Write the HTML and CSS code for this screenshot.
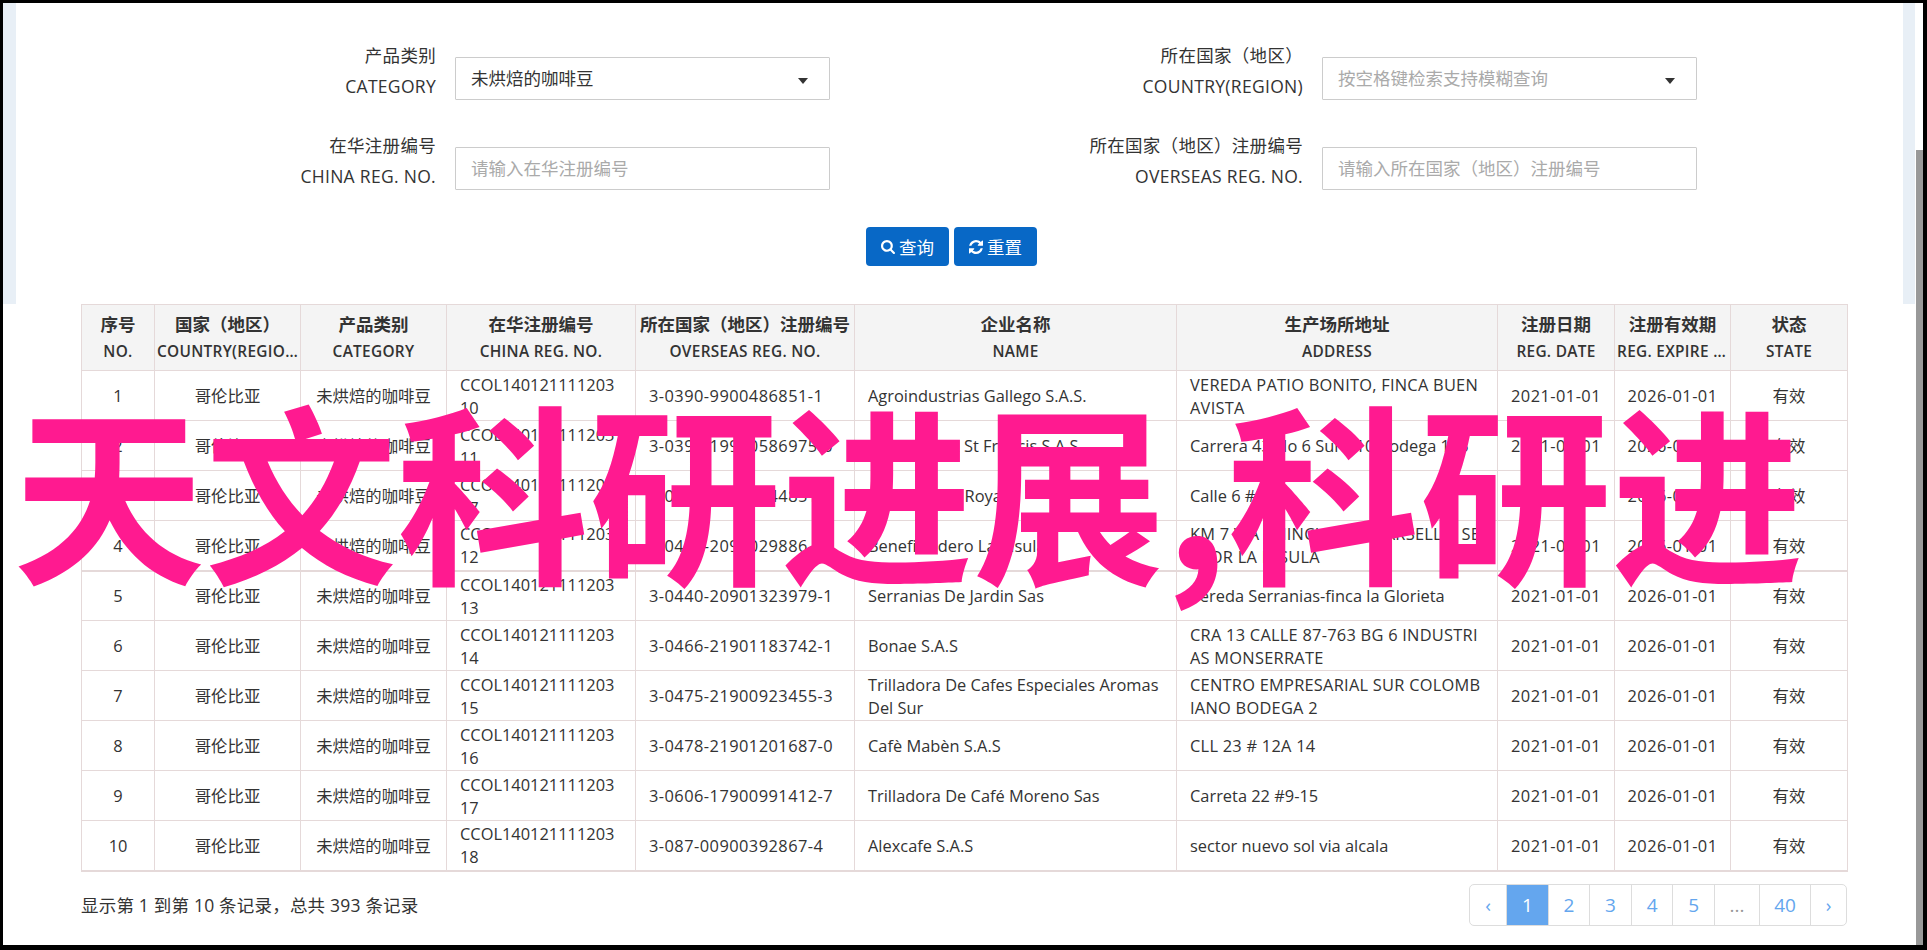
FILE: index.html
```html
<!DOCTYPE html>
<html lang="zh-CN">
<head>
  <meta charset="UTF-8" />
  <title>天文科研进展,科研进</title>
  <link rel="stylesheet" href="styles.css">
</head>
<body>
<div class="frame">

  <form class="search">
    <div class="fields">
      <div class="field">
        <label class="field-label">产品类别<br>CATEGORY</label>
        <div class="control">未烘焙的咖啡豆<span class="caret"></span></div>
      </div>
      <div class="field">
        <label class="field-label">所在国家&#xFF08;地区&#xFF09;<br>COUNTRY(REGION)</label>
        <div class="control hint">按空格键检索支持模糊查询<span class="caret"></span></div>
      </div>
      <div class="field">
        <label class="field-label">在华注册编号<br>CHINA REG. NO.</label>
        <div class="control hint">请输入在华注册编号</div>
      </div>
      <div class="field">
        <label class="field-label">所在国家&#xFF08;地区&#xFF09;注册编号<br>OVERSEAS REG. NO.</label>
        <div class="control hint">请输入所在国家&#xFF08;地区&#xFF09;注册编号</div>
      </div>
    </div>
    <div class="actions">
      <button type="button" class="btn">
        <svg class="icon" viewBox="0 0 1664 1664"><path fill="currentColor" d="M1152 704q0-185-131.5-316.5t-316.5-131.5-316.5 131.5-131.5 316.5 131.5 316.5 316.5 131.5 316.5-131.5 131.5-316.5zm512 832q0 52-38 90t-90 38q-54 0-90-38l-343-342q-179 124-399 124-143 0-273.5-55.5t-225-150-150-225-55.5-273.5 55.5-273.5 150-225 225-150 273.5-55.5 273.5 55.5 225 150 150 225 55.5 273.5q0 220-124 399l343 343q37 37 37 90z"/></svg>查询
      </button>
      <button type="button" class="btn">
        <svg class="icon" viewBox="0 0 1536 1536"><path fill="currentColor" d="M1511 928q0 5-1 7-64 268-268 434.5t-478 166.5q-146 0-282.5-55t-243.5-157l-129 129q-19 19-45 19t-45-19-19-45v-448q0-26 19-45t45-19h448q26 0 45 19t19 45-19 45l-137 137q71 66 161 102t187 36q134 0 250-65t186-179q11-17 53-117 8-23 30-23h192q13 0 22.5 9.5t9.5 22.5zm25-800v448q0 26-19 45t-45 19h-448q-26 0-45-19t-19-45 19-45l138-138q-148-137-349-137-134 0-250 65t-186 179q-11 17-53 117-8 23-30 23h-199q-13 0-22.5-9.5t-9.5-22.5v-7q65-268 270-434.5t480-166.5q146 0 284 55.5t245 156.5l130-129q19-19 45-19t45 19 19 45z"/></svg>重置
      </button>
    </div>
  </form>

  <div class="results">
    <table class="grid">
      <colgroup>
        <col class="c-no"><col class="c-country"><col class="c-cat"><col class="c-china">
        <col class="c-overseas"><col class="c-name"><col class="c-addr">
        <col class="c-date"><col class="c-exp"><col class="c-state">
      </colgroup>
      <thead>
        <tr>
          <th>序号<span>NO.</span></th>
          <th>国家&#xFF08;地区&#xFF09;<span>COUNTRY(REGION)</span></th>
          <th>产品类别<span>CATEGORY</span></th>
          <th>在华注册编号<span>CHINA REG. NO.</span></th>
          <th>所在国家&#xFF08;地区&#xFF09;注册编号<span>OVERSEAS REG. NO.</span></th>
          <th>企业名称<span>NAME</span></th>
          <th>生产场所地址<span>ADDRESS</span></th>
          <th>注册日期<span>REG. DATE</span></th>
          <th>注册有效期<span>REG. EXPIRE DATE</span></th>
          <th>状态<span>STATE</span></th>
        </tr>
      </thead>
      <tbody>
        <tr><td class="mid">1</td><td class="mid">哥伦比亚</td><td class="mid">未烘焙的咖啡豆</td><td>CCOL14012111120310</td><td class="code">3-0390-9900486851-1</td><td>Agroindustrias Gallego S.A.S.</td><td class="addr caps">VEREDA PATIO BONITO, FINCA BUEN AVISTA</td><td class="mid code">2021-01-01</td><td class="mid code">2026-01-01</td><td class="mid">有效</td></tr>
        <tr><td class="mid">2</td><td class="mid">哥伦比亚</td><td class="mid">未烘焙的咖啡豆</td><td>CCOL14012111120311</td><td class="code">3-0391-19900586975-0</td><td>Cafes Oro &amp; St Francis S.A.S</td><td class="addr">Carrera 43 No 6 Sur-110 Bodega 105</td><td class="mid code">2021-01-01</td><td class="mid code">2026-01-01</td><td class="mid">有效</td></tr>
        <tr><td class="mid">3</td><td class="mid">哥伦比亚</td><td class="mid">未烘焙的咖啡豆</td><td>CCOL14012111120317</td><td class="code">3-0408-20901144851-1</td><td>Cooperativa Royal</td><td class="addr">Calle 6 # 4-28</td><td class="mid code">2021-01-01</td><td class="mid code">2026-01-01</td><td class="mid">有效</td></tr>
        <tr><td class="mid">4</td><td class="mid">哥伦比亚</td><td class="mid">未烘焙的咖啡豆</td><td>CCOL14012111120312</td><td class="code">3-0438-2090029886-9</td><td>Beneficiadero La Insula</td><td class="addr caps">KM 7 VÍA CHINCHINÁ - MARSELLA, SECTOR LA INSULA</td><td class="mid code">2021-01-01</td><td class="mid code">2026-01-01</td><td class="mid">有效</td></tr>
        <tr class="split"><td class="mid">5</td><td class="mid">哥伦比亚</td><td class="mid">未烘焙的咖啡豆</td><td>CCOL14012111120313</td><td class="code">3-0440-20901323979-1</td><td>Serranias De Jardin Sas</td><td class="addr">Vereda Serranias-finca la Glorieta</td><td class="mid code">2021-01-01</td><td class="mid code">2026-01-01</td><td class="mid">有效</td></tr>
        <tr><td class="mid">6</td><td class="mid">哥伦比亚</td><td class="mid">未烘焙的咖啡豆</td><td>CCOL14012111120314</td><td class="code">3-0466-21901183742-1</td><td>Bonae S.A.S</td><td class="addr caps">CRA 13 CALLE 87-763 BG 6 INDUSTRIAS MONSERRATE</td><td class="mid code">2021-01-01</td><td class="mid code">2026-01-01</td><td class="mid">有效</td></tr>
        <tr><td class="mid">7</td><td class="mid">哥伦比亚</td><td class="mid">未烘焙的咖啡豆</td><td>CCOL14012111120315</td><td class="code">3-0475-21900923455-3</td><td>Trilladora De Cafes Especiales Aromas Del Sur</td><td class="addr caps">CENTRO EMPRESARIAL SUR COLOMBIANO BODEGA 2</td><td class="mid code">2021-01-01</td><td class="mid code">2026-01-01</td><td class="mid">有效</td></tr>
        <tr><td class="mid">8</td><td class="mid">哥伦比亚</td><td class="mid">未烘焙的咖啡豆</td><td>CCOL14012111120316</td><td class="code">3-0478-21901201687-0</td><td>Cafè Mabèn S.A.S</td><td class="addr caps">CLL 23 # 12A 14</td><td class="mid code">2021-01-01</td><td class="mid code">2026-01-01</td><td class="mid">有效</td></tr>
        <tr><td class="mid">9</td><td class="mid">哥伦比亚</td><td class="mid">未烘焙的咖啡豆</td><td>CCOL14012111120317</td><td class="code">3-0606-17900991412-7</td><td>Trilladora De Café Moreno Sas</td><td class="addr">Carreta 22 #9-15</td><td class="mid code">2021-01-01</td><td class="mid code">2026-01-01</td><td class="mid">有效</td></tr>
        <tr><td class="mid">10</td><td class="mid">哥伦比亚</td><td class="mid">未烘焙的咖啡豆</td><td>CCOL14012111120318</td><td class="code">3-087-00900392867-4</td><td>Alexcafe S.A.S</td><td class="addr">sector nuevo sol via alcala</td><td class="mid code">2021-01-01</td><td class="mid code">2026-01-01</td><td class="mid">有效</td></tr>
      </tbody>
    </table>

    <div class="foot">
      <span class="summary">显示第 1 到第 10 条记录&#xFF0C;总共 393 条记录</span>
      <ul class="pager">
        <li class="p-arrow">‹</li>
        <li class="p-num active">1</li>
        <li class="p-num">2</li>
        <li class="p-num">3</li>
        <li class="p-num">4</li>
        <li class="p-num">5</li>
        <li class="p-gap">...</li>
        <li class="p-last">40</li>
        <li class="p-arrow">›</li>
      </ul>
    </div>
  </div>

  <div class="scroll-thumb"></div>
  <div class="banner">天文科研进展,科研进</div>
</div>
</body>
</html>
```

FILE: styles.css
```css
* {
  margin: 0;
  padding: 0;
  box-sizing: border-box;
}

body {
  font-family: "Open Sans", "Noto Sans CJK SC", sans-serif;
  font-size: 16.4px;
  color: #333;
  background: #fff;
  overflow: hidden;
}

.frame {
  position: relative;
  height: 950px;
  border-style: solid;
  border-color: #000;
  border-width: 3px 4px 5px 3px;
  overflow: hidden;
}

/* search form */
.search {
  height: 301px;
  border-left: 13px solid #e8eff6;
  border-right: 12px solid #e8eff6;
  margin-right: 8px;
  padding-top: 37px;
}

.fields {
  display: grid;
  grid-template-columns: 814px 814px;
  column-gap: 53px;
  row-gap: 28px;
}

.field {
  display: grid;
  grid-template-columns: 420px 375px;
  column-gap: 19px;
}

.field-label {
  font-size: 17.5px;
  line-height: 31px;
  letter-spacing: 0.3px;
  text-align: right;
}

.control {
  position: relative;
  height: 43px;
  margin-top: 17px;
  padding: 0 15px;
  border: 1px solid #ccc;
  border-radius: 1px;
  font-size: 17.5px;
  line-height: 41px;
}

.hint {
  color: #aaa;
}

.caret {
  position: absolute;
  right: 21px;
  top: 20px;
  border-top: 6px solid #333;
  border-left: 5px solid transparent;
  border-right: 5px solid transparent;
}

.actions {
  display: flex;
  gap: 5px;
  margin-top: 35px;
  padding-left: 850px;
}

.btn {
  display: flex;
  align-items: center;
  justify-content: center;
  gap: 4px;
  width: 83px;
  height: 39px;
  background: #0868c6;
  border: none;
  border-radius: 4px;
  color: #fff;
  font-family: inherit;
  font-size: 17.5px;
}

.icon {
  width: 14px;
  height: 14px;
}

/* table */
.results {
  padding-left: 78px;
  width: 1844px;
}

.grid {
  width: 1766px;
  table-layout: fixed;
  border-collapse: collapse;
}

.c-no { width: 73px; }
.c-country { width: 146px; }
.c-cat { width: 146px; }
.c-china { width: 189px; }
.c-overseas { width: 219px; }
.c-name { width: 322px; }
.c-addr { width: 321px; }
.c-date { width: 117px; }
.c-exp { width: 116px; }
.c-state { width: 117px; }

.grid th,
.grid td {
  border: 1px solid #e5d9d9;
}

.grid th {
  height: 66px;
  background: #f4f4f4;
  font-size: 17.5px;
  font-weight: 700;
  line-height: 27px;
  text-align: center;
  padding: 0 2px;
}

.grid th span {
  display: block;
  font-size: 15.4px;
  font-weight: 600;
  letter-spacing: 0.3px;
  white-space: nowrap;
  overflow: hidden;
  text-overflow: ellipsis;
}

.grid td {
  height: 50px;
  padding: 0 13px;
  line-height: 23px;
  word-break: break-all;
}

.grid td.mid {
  text-align: center;
  padding: 0 4px;
}

.grid td.code {
  letter-spacing: 0.45px;
}

.grid td.addr {
  padding-right: 16px;
}

.grid td.caps {
  letter-spacing: 0.25px;
}

.grid tr.split td {
  border-top: 2px solid #e5d9d9;
}

.grid tbody tr:last-child td {
  border-bottom: 2px solid #e5d9d9;
}

.foot {
  display: flex;
  justify-content: space-between;
  align-items: center;
  margin-top: 12px;
}

.summary {
  font-size: 17.5px;
  letter-spacing: 0.2px;
}

.pager {
  display: flex;
  height: 42px;
  list-style: none;
  border: 1px solid #ddd;
  border-radius: 5px;
  overflow: hidden;
  color: #64a6ee;
  font-size: 19px;
  line-height: 40px;
  text-align: center;
}

.pager li + li {
  border-left: 1px solid #ddd;
}

.p-arrow { width: 36px; }
.p-num { width: 41.6px; }
.p-gap { width: 45px; color: #999; }
.p-last { width: 51px; }

.pager .active {
  background: #64a6ee;
  color: #fff;
}

/* scrollbar + watermark lie over the page */
.scroll-thumb {
  position: absolute;
  right: 0;
  top: 147px;
  bottom: 0;
  width: 7px;
  background: #999;
}

.banner {
  position: absolute;
  left: 10px;
  top: 368px;
  font-family: "Noto Sans CJK SC", sans-serif;
  font-size: 192px;
  font-weight: 700;
  line-height: 230px;
  color: #ff1a90;
  white-space: nowrap;
}
```
